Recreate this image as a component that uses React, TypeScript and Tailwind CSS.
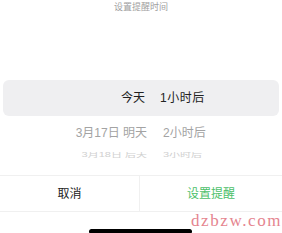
import React from "react";

const font = { fontFamily: '"Liberation Sans", "Noto Sans CJK SC", sans-serif' };

const App = () => {
	return (
		<div
			className="relative w-[282px] h-[233px] bg-white overflow-hidden flex flex-col"
			style={font}
		>
			<div className="h-[14px] pt-[1px] text-center text-[9px] leading-[12px] text-[#a0a0a0]">
				设置提醒时间
			</div>

			<div className="h-[66px]" />

			<div className="px-[3px]">
				<div className="h-[36px] rounded-[6px] bg-[#efeff1] flex items-center text-[12px] text-[#222]">
					<div className="w-[142px] text-right">今天</div>
					<div className="ml-[15px] tracking-[0.5px]">1小时后</div>
				</div>
			</div>

			<div className="h-[34px] flex items-center text-[12px] text-[#a3a3a3]">
				<div className="w-[147px] text-right">3月17日 明天</div>
				<div className="ml-[16px]">2小时后</div>
			</div>

			<div className="h-[10px] flex items-center text-[11px] text-[#d0d0d0] scale-y-[0.6] overflow-hidden">
				<div className="w-[147px] text-right">3月18日 后天</div>
				<div className="ml-[16px]">3小时后</div>
			</div>

			<div className="h-[15px]" />

			<div className="h-[37px] border-y border-[#f0f0f0] flex text-[12px]">
				<div className="w-[140px] flex items-center justify-center text-[#222] border-r border-[#f0f0f0]">
					取消
				</div>
				<div className="flex-1 flex items-center justify-center text-[#4cbf6a]">
					设置提醒
				</div>
			</div>

			<div className="flex-1 flex items-end justify-start pl-[89px]">
				<div className="w-[103px] h-[5px] mb-[-1px] rounded-full bg-black" />
			</div>

			<div
				className="absolute left-[191px] top-[211px] text-[17px] leading-[20px] text-[#e5858f] tracking-[1.6px] whitespace-nowrap"
				style={{ fontFamily: '"Liberation Serif", serif' }}
			>
				dzbzw.com
			</div>
		</div>
	);
};

export default App;
